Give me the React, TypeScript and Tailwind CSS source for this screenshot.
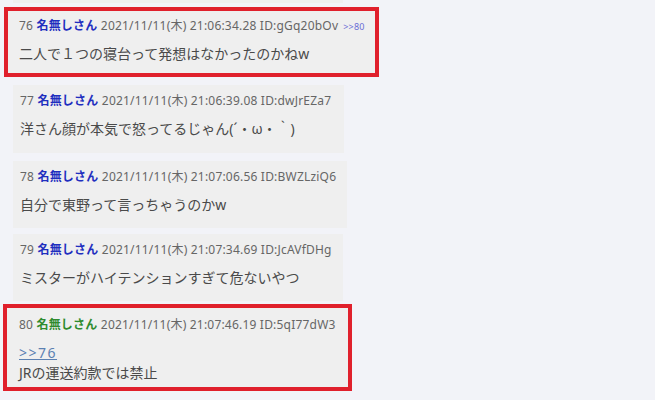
import React from 'react';

interface Post {
  no: number;
  date: string;
  id: string;
  anchor?: string;
  reply?: string;
  body: string;
  green?: boolean;
  highlight?: boolean;
  width: number;
  height: number;
  gap: number;
}

const posts: Post[] = [
  { no: 76, date: '2021/11/11(木) 21:06:34.28', id: 'gGq20bOv', anchor: '>>80', body: '二人で１つの寝台って発想はなかったのかねw', highlight: true, width: 375, height: 70, gap: 4 },
  { no: 77, date: '2021/11/11(木) 21:06:39.08', id: 'dwJrEZa7', body: '洋さん顔が本気で怒ってるじゃん(´・ω・｀)', width: 331, height: 68, gap: 8 },
  { no: 78, date: '2021/11/11(木) 21:07:06.56', id: 'BWZLziQ6', body: '自分で東野って言っちゃうのかw', width: 334, height: 67, gap: 8 },
  { no: 79, date: '2021/11/11(木) 21:07:34.69', id: 'JcAVfDHg', body: 'ミスターがハイテンションすぎて危ないやつ', width: 330, height: 67, gap: 6 },
  { no: 80, date: '2021/11/11(木) 21:07:46.19', id: '5qI77dW3', reply: '>>76', body: 'JRの運送約款では禁止', green: true, highlight: true, width: 349, height: 87, gap: 3 },
];

const font = { fontFamily: '"Noto Sans", "Noto Sans CJK JP", sans-serif' };

const PostHeader: React.FC<{ post: Post }> = ({ post }) => (
  <div className="h-[18px] text-[12px] leading-[18px] tracking-[0.2px] text-[#666] whitespace-nowrap">
    {post.no}{' '}
    <b className={post.green ? 'text-[#2e8b2e]' : 'text-[#1f2fbf]'}>名無しさん</b>{' '}
    {post.date} ID:{post.id}
    {post.anchor && <span className="ml-[5px] text-[9px] leading-none text-[#6a6ed6]">{post.anchor}</span>}
  </div>
);

const PostCard: React.FC<{ post: Post }> = ({ post }) => {
  const size = { width: post.width, height: post.height, marginTop: post.gap };
  if (post.highlight && post.reply) {
    return (
      <div className="-ml-[10px] border-4 border-[#e0202c] bg-[#efefef] pl-[12px] pr-2 pt-[8px]" style={size}>
        <PostHeader post={post} />
        <div className="mt-[9px] text-[14px] leading-[20px] text-[#4a4a4a]">
          <span className="text-[#5b80b2] underline tracking-[1.5px]">{post.reply}</span>
          <br />
          {post.body}
        </div>
      </div>
    );
  }
  if (post.highlight) {
    return (
      <div className="-ml-[9px] border-4 border-[#e0202c] bg-[#efefef] pl-[11px] pr-2 pt-[6px]" style={size}>
        <PostHeader post={post} />
        <div className="mt-[9px] h-[20px] text-[14px] leading-[20px] text-[#4a4a4a]">{post.body}</div>
      </div>
    );
  }
  return (
    <div className="bg-[#efefef] pl-[7px] pr-2 pt-[7px]" style={size}>
      <PostHeader post={post} />
      <div className="mt-[9px] h-[20px] text-[14px] leading-[20px] text-[#4a4a4a]">{post.body}</div>
    </div>
  );
};

export default function App() {
  return (
    <div className="w-[655px] h-[400px] overflow-hidden bg-[#f2f3f8] pl-[13px]" style={font}>
      <div className="flex flex-col items-start">
        <div className="h-[3px] w-[330px] bg-[#efefef]" />
        {posts.map(p => (
          <PostCard key={p.no} post={p} />
        ))}
      </div>
    </div>
  );
}
